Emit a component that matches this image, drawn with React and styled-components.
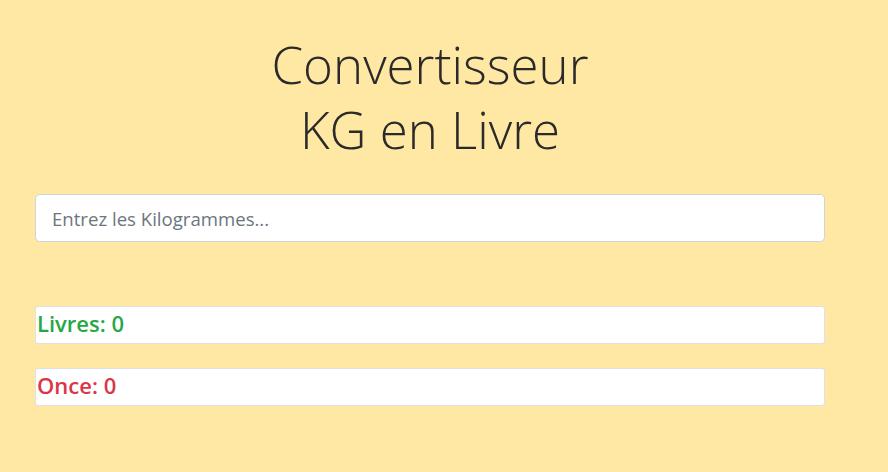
import React, { useState } from "react";
import styled, { createGlobalStyle } from "styled-components";

const GlobalStyle = createGlobalStyle`
  html, body {
    margin: 0;
    padding: 0;
    background: #ffe8a4;
  }
  body {
    font-family: "Open Sans", "Noto Sans", sans-serif;
    color: #212529;
  }
`;

const Page = styled.div`
  min-height: 472px;
  padding: 32px 63px 0 35px;
  box-sizing: border-box;
`;

const Title = styled.h1`
  margin: 0 0 32px;
  text-align: center;
  font-size: 51px;
  font-weight: 300;
  line-height: 65px;
  color: #2a2a2a;
`;

const Input = styled.input`
  display: block;
  width: 100%;
  box-sizing: border-box;
  height: 48px;
  padding: 0 16px;
  font-family: inherit;
  font-size: 18.6px;
  color: #495057;
  background: #fff;
  border: 1px solid #ced4da;
  border-radius: 4.8px;
  outline: none;
  &::placeholder {
    color: #6c757d;
  }
`;

const Results = styled.div`
  margin-top: 64px;
  display: flex;
  flex-direction: column;
  gap: 24px;
`;

const ResultBox = styled.div`
  height: 38px;
  box-sizing: border-box;
  background: #fff;
  border: 1px solid #dfe1e4;
  border-radius: 3px;
  padding: 1px 0 0 1px;
  font-size: 22px;
  font-weight: 600;
  line-height: 30px;
  color: ${(p) => p.color};
`;

export default function App() {
  const [kg, setKg] = useState("");
  const n = parseFloat(kg);
  const livres = isNaN(n) ? 0 : +(n * 2.20462).toFixed(2);
  const once = isNaN(n) ? 0 : +(n * 35.274).toFixed(2);

  return (
    <>
      <GlobalStyle />
      <Page>
        <Title>
          Convertisseur
          <br />
          KG en Livre
        </Title>
        <Input
          placeholder="Entrez les Kilogrammes..."
          value={kg}
          onChange={(e) => setKg(e.target.value)}
        />
        <Results>
          <ResultBox color="#28a745">Livres: {livres}</ResultBox>
          <ResultBox color="#dc3545">Once: {once}</ResultBox>
        </Results>
      </Page>
    </>
  );
}
